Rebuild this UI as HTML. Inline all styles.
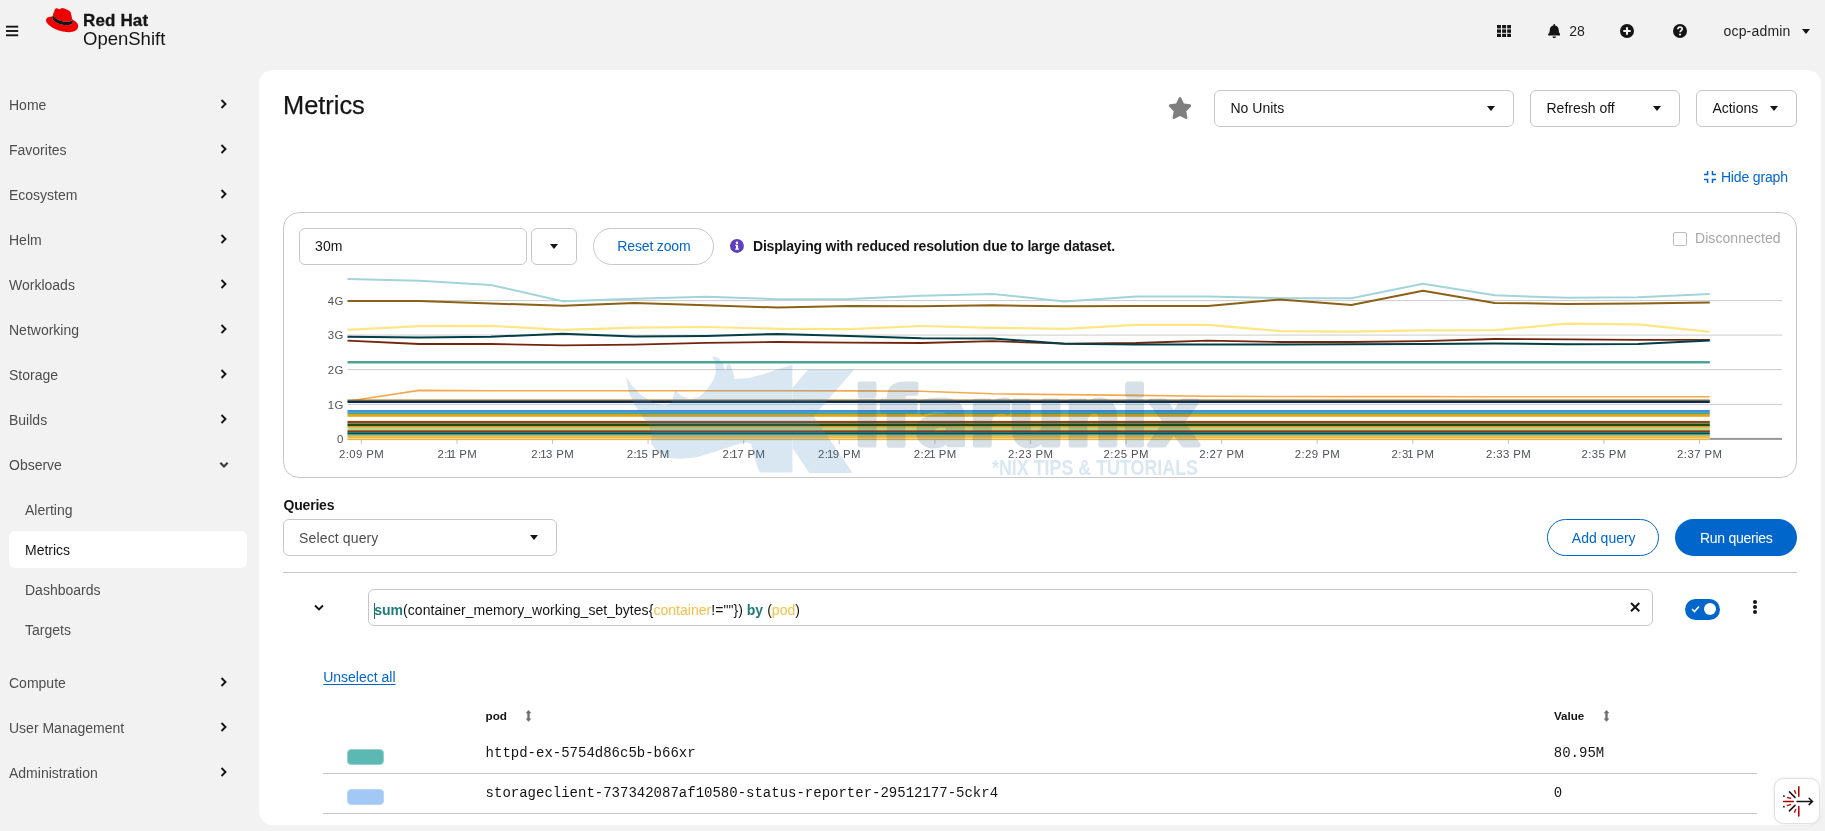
<!DOCTYPE html>
<html lang="en">
<head>
<meta charset="utf-8">
<title>Metrics · Red Hat OpenShift</title>
<style>
*{box-sizing:border-box;margin:0;padding:0}
html,body{width:1825px;height:831px;overflow:hidden;background:#f2f2f2;font-family:"Liberation Sans",sans-serif;color:#151515;font-size:14px}
.abs{position:absolute}
#mast{position:absolute;left:0;top:0;width:1825px;height:70px;will-change:transform}
#side{position:absolute;left:0;top:70px;width:259px;height:761px;will-change:transform}
.nav{position:absolute;left:9px;height:20px;line-height:20px;color:#4d4d4d;font-size:14px;white-space:nowrap}
.nav.sub{left:25px}
.chev{position:absolute;left:220px;width:8px;height:10px}
#main{position:absolute;left:259px;top:69.600px;width:1562px;height:755.600px;background:#fff;border-radius:14px}
#content{position:absolute;left:0;top:0;width:1825px;height:831px;will-change:transform}
.t{position:absolute;white-space:nowrap;line-height:1}
.box{position:absolute;border:1px solid #c7c7c7;border-radius:6px;background:#fff}
.caret{position:absolute;width:0;height:0;border-left:4.5px solid transparent;border-right:4.5px solid transparent;border-top:5px solid #151515}
.hr{position:absolute;height:1px;background:#c7c7c7}
.mono{font-family:"Liberation Mono",monospace}
</style>
</head>
<body>
<div id="mast">
  <!-- hamburger -->
  <svg class="abs" style="left:6px;top:25px" width="13" height="12" viewBox="0 0 13 12"><rect x="0" y="0.700" width="12.200" height="1.900" fill="#151515"/><rect x="0" y="5.030" width="12.200" height="1.900" fill="#151515"/><rect x="0" y="9.350" width="12.200" height="1.900" fill="#151515"/></svg>
  <!-- hat -->
  <svg class="abs" style="left:45.8px;top:7.900px" width="34" height="26" viewBox="0 0 34 26"><path d="M22.6 14.8c2.2 0 5.4-.5 5.4-3.100 0-.2 0-.4-.1-.6L26.600 5.400c-.3-1.300-.6-1.900-2.800-3-1.700-.9-5.500-2.300-6.600-2.300-1 0-1.300 1.300-2.600 1.300-1.200 0-2.100-1-3.200-1-1.100 0-1.800.7-2.300 2.200 0 0-1.500 4.200-1.700 4.800 0 .1 0 .2 0 .3 0 1.600 6.400 7.100 15.200 7.100zM28.500 12.700c.3 1.500.3 1.600.3 1.800 0 2.500-2.800 3.900-6.500 3.900-8.400 0-15.700-4.900-15.700-8.100 0-.5.100-.9.300-1.300C3.900 9.200 0 9.700 0 13.200c0 5.700 13.500 12.700 24.200 12.700 8.200 0 10.300-3.700 10.300-6.600 0-2.300-2-4.900-5.600-6.500z" fill="#e00" transform="scale(0.935)"/><path d="M28.500 12.700c.3 1.500.3 1.600.3 1.800 0 2.500-2.800 3.900-6.500 3.900-8.400 0-15.700-4.900-15.700-8.100 0-.5.100-.9.300-1.300l.7-1.600c0 .1 0 .2 0 .3 0 1.600 6.400 7.100 15.200 7.100 2.200 0 5.400-.5 5.400-3.100 0-.2 0-.4-.1-.6z" fill="#151515" transform="scale(0.935)"/></svg>
  <div class="t" style="left:83px;top:12.300px;font-size:17px;font-weight:bold;letter-spacing:0.15px;-webkit-text-stroke:0.3px #151515;color:#151515">Red Hat</div>
  <div class="t" style="left:83px;top:30px;font-size:18.500px;color:#151515">OpenShift</div>
  <!-- app launcher -->
  <svg class="abs" style="left:1497px;top:25px" width="14.200" height="12.200" viewBox="0 0 14.200 12.200"><g fill="#151515"><rect x="0" y="0" width="4" height="3.400"/><rect x="5.100" y="0" width="4" height="3.400"/><rect x="10.200" y="0" width="4" height="3.400"/><rect x="0" y="4.400" width="4" height="3.400"/><rect x="5.100" y="4.400" width="4" height="3.400"/><rect x="10.200" y="4.400" width="4" height="3.400"/><rect x="0" y="8.800" width="4" height="3.400"/><rect x="5.100" y="8.800" width="4" height="3.400"/><rect x="10.200" y="8.800" width="4" height="3.400"/></g></svg>
  <!-- bell -->
  <svg class="abs" style="left:1547.800px;top:23.800px" width="12.500" height="14.300" viewBox="0 0 448 512"><path fill="#151515" d="M224 512c35.320 0 63.970-28.650 63.970-64H160.030c0 35.350 28.650 64 63.970 64zm215.390-149.710c-19.320-20.760-55.470-51.990-55.470-154.290 0-77.700-54.480-139.900-127.940-155.160V32c0-17.670-14.320-32-31.980-32s-31.980 14.330-31.980 32v20.840C118.560 68.100 64.080 130.300 64.080 208c0 102.300-36.150 133.530-55.470 154.290-6 6.450-8.660 14.160-8.610 21.710.11 16.400 12.980 32 32.100 32h383.800c19.120 0 32-15.600 32.100-32 .05-7.550-2.610-15.270-8.610-21.710z"/></svg>
  <div class="t" style="left:1569.200px;top:23.650px;font-size:14px;color:#1f1f1f">28</div>
  <!-- plus circle -->
  <svg class="abs" style="left:1620px;top:23.800px" width="14" height="14" viewBox="0 0 14 14"><circle cx="7" cy="7" r="7" fill="#151515"/><path d="M7 3.300V10.700M3.300 7H10.700" stroke="#f2f2f2" stroke-width="2.100"/></svg>
  <!-- question circle -->
  <svg class="abs" style="left:1673px;top:23.800px" width="14" height="14" viewBox="0 0 14 14"><circle cx="7" cy="7" r="7" fill="#151515"/><path d="M4.900 5.300C4.900 3.900 5.900 3.200 7.050 3.200C8.300 3.200 9.200 4 9.200 5.050C9.200 6.500 7.100 6.600 7.100 8.300" fill="none" stroke="#f2f2f2" stroke-width="1.700"/><circle cx="7.050" cy="10.500" r="1.100" fill="#f2f2f2"/></svg>
  <div class="t" style="left:1723.500px;top:23.650px;font-size:14px;letter-spacing:0.18px;color:#1f1f1f">ocp-admin</div>
  <div class="caret" style="left:1801.900px;top:29px"></div>
</div>
<div id="side">
  <div class="nav" style="top:25px">Home</div>
  <svg class="chev" style="top:29px" viewBox="0 0 8 10"><path d="M1.500 1 L5.500 5 L1.500 9" fill="none" stroke="#151515" stroke-width="1.900"/></svg>
  <div class="nav" style="top:70px">Favorites</div>
  <svg class="chev" style="top:74px" viewBox="0 0 8 10"><path d="M1.500 1 L5.500 5 L1.500 9" fill="none" stroke="#151515" stroke-width="1.900"/></svg>
  <div class="nav" style="top:115px">Ecosystem</div>
  <svg class="chev" style="top:119px" viewBox="0 0 8 10"><path d="M1.500 1 L5.500 5 L1.500 9" fill="none" stroke="#151515" stroke-width="1.900"/></svg>
  <div class="nav" style="top:160px">Helm</div>
  <svg class="chev" style="top:164px" viewBox="0 0 8 10"><path d="M1.500 1 L5.500 5 L1.500 9" fill="none" stroke="#151515" stroke-width="1.900"/></svg>
  <div class="nav" style="top:205px">Workloads</div>
  <svg class="chev" style="top:209px" viewBox="0 0 8 10"><path d="M1.500 1 L5.500 5 L1.500 9" fill="none" stroke="#151515" stroke-width="1.900"/></svg>
  <div class="nav" style="top:250px">Networking</div>
  <svg class="chev" style="top:254px" viewBox="0 0 8 10"><path d="M1.500 1 L5.500 5 L1.500 9" fill="none" stroke="#151515" stroke-width="1.900"/></svg>
  <div class="nav" style="top:295px">Storage</div>
  <svg class="chev" style="top:299px" viewBox="0 0 8 10"><path d="M1.500 1 L5.500 5 L1.500 9" fill="none" stroke="#151515" stroke-width="1.900"/></svg>
  <div class="nav" style="top:340px">Builds</div>
  <svg class="chev" style="top:344px" viewBox="0 0 8 10"><path d="M1.500 1 L5.500 5 L1.500 9" fill="none" stroke="#151515" stroke-width="1.900"/></svg>
  <div class="nav" style="top:385px">Observe</div>
  <svg class="chev" style="top:391px;left:219px;width:10px;height:8px" viewBox="0 0 10 8"><path d="M1.300 1.800 L5 5.500 L8.700 1.800" fill="none" stroke="#3d3d3d" stroke-width="2.200"/></svg>
  <div class="nav" style="top:603px">Compute</div>
  <svg class="chev" style="top:607px" viewBox="0 0 8 10"><path d="M1.500 1 L5.500 5 L1.500 9" fill="none" stroke="#151515" stroke-width="1.900"/></svg>
  <div class="nav" style="top:648px">User Management</div>
  <svg class="chev" style="top:652px" viewBox="0 0 8 10"><path d="M1.500 1 L5.500 5 L1.500 9" fill="none" stroke="#151515" stroke-width="1.900"/></svg>
  <div class="nav" style="top:693px">Administration</div>
  <svg class="chev" style="top:697px" viewBox="0 0 8 10"><path d="M1.500 1 L5.500 5 L1.500 9" fill="none" stroke="#151515" stroke-width="1.900"/></svg>
  <div class="abs" style="left:9px;top:461px;width:238px;height:37px;background:#fff;border-radius:6px"></div>
  <div class="nav sub" style="top:430px">Alerting</div>
  <div class="nav sub" style="top:470px;color:#151515">Metrics</div>
  <div class="nav sub" style="top:510px">Dashboards</div>
  <div class="nav sub" style="top:550px">Targets</div>
</div>
<div id="main"></div>
<div id="content">
<div class="t" style="left:283.00px;top:92.70px;font-size:25.4px;color:#151515;-webkit-text-stroke:0.25px #151515">Metrics</div>
<svg class="abs" style="left:1168.100px;top:97px" width="24" height="22" viewBox="0 0 576 512" preserveAspectRatio="none"><path fill="#7f7f7f" d="M259.300 17.800L194 150.200 47.900 171.500c-26.200 3.800-36.700 36.100-17.700 54.600l105.700 103-25 145.500c-4.500 26.300 23.200 46 46.400 33.700L288 439.600l130.700 68.700c23.200 12.200 50.900-7.400 46.400-33.700l-25-145.500 105.700-103c19-18.500 8.500-50.800-17.700-54.600L382 150.200 316.700 17.800c-11.700-23.600-45.600-23.900-57.400 0z"/></svg>
<div class="box" style="left:1214px;top:90px;width:300px;height:37px"></div>
<div class="t" style="left:1230.50px;top:101.25px;font-size:14px;color:#151515">No Units</div>
<div class="caret" style="left:1486.5px;top:106px"></div>
<div class="box" style="left:1530px;top:90px;width:150px;height:37px"></div>
<div class="t" style="left:1546.50px;top:101.25px;font-size:14px;color:#151515">Refresh off</div>
<div class="caret" style="left:1652.5px;top:106px"></div>
<div class="box" style="left:1696px;top:90px;width:101px;height:37px"></div>
<div class="t" style="left:1712.40px;top:101.25px;font-size:14px;color:#151515">Actions</div>
<div class="caret" style="left:1769.5px;top:106px"></div>
<svg class="abs" style="left:1703.900px;top:170.900px" width="12.100" height="12.100" viewBox="0 0 12.100 12.100"><g fill="none" stroke="#0066cc" stroke-width="1.500"><path d="M0 3.600H3.600V0"/><path d="M8.500 0V3.600H12.100"/><path d="M0 8.500H3.600V12.100"/><path d="M12.100 8.500H8.500V12.100"/></g></svg>
<div class="t" style="left:1720.90px;top:169.85px;font-size:14px;color:#0066cc;letter-spacing:-0.15px">Hide graph</div>
<div class="box" style="left:283px;top:212px;width:1514px;height:265.500px;border-radius:16px;border-color:#c7c7c7"></div>
<div class="box" style="left:299px;top:228px;width:228px;height:37px"></div>
<div class="t" style="left:315.10px;top:238.75px;font-size:14px;">30m</div>
<div class="box" style="left:531px;top:228px;width:46px;height:37px"></div>
<div class="caret" style="left:549.500px;top:244px"></div>
<div class="box" style="left:593px;top:228px;width:120.500px;height:37px;border-radius:19px"></div>
<div class="t" style="left:617.30px;top:238.75px;font-size:14px;color:#0066cc;letter-spacing:-0.15px">Reset zoom</div>
<svg class="abs" style="left:729.800px;top:239.300px" width="13.900" height="13.900" viewBox="0 0 16 16"><circle cx="8" cy="8" r="8" fill="#5e40be"/><rect x="6.900" y="6.700" width="2.400" height="5.300" fill="#fff"/><rect x="6" y="6.700" width="2" height="1.300" fill="#fff"/><rect x="5.900" y="11" width="4.400" height="1.300" fill="#fff"/><circle cx="8" cy="4.300" r="1.450" fill="#fff"/></svg>
<div class="t" id="disp" style="left:753.00px;top:238.75px;font-size:14px;font-weight:bold;color:#151515;letter-spacing:-0.19px">Displaying with reduced resolution due to large dataset.</div>
<div class="abs" style="left:1673px;top:232px;width:14px;height:14px;border:1px solid #bdbdbd;border-radius:2px;background:#fff"></div>
<div class="t" style="left:1695.00px;top:231.15px;font-size:14px;color:#a6a6a6;letter-spacing:0.07px">Disconnected</div>
<svg class="abs" style="left:0;top:0" width="1825" height="831" viewBox="0 0 1825 831" font-family="'Liberation Sans',sans-serif">
<line x1="347.500" x2="1782" y1="300.6" y2="300.6" stroke="#cbcbcb" stroke-width="1"/>
<line x1="347.500" x2="1782" y1="335.1" y2="335.1" stroke="#cbcbcb" stroke-width="1"/>
<line x1="347.500" x2="1782" y1="369.6" y2="369.6" stroke="#cbcbcb" stroke-width="1"/>
<line x1="347.500" x2="1782" y1="404.4" y2="404.4" stroke="#cbcbcb" stroke-width="1"/>
<polyline points="347.5,278.9 419.2,280.8 490.9,285.0 562.6,301.2 634.3,298.8 706.0,296.8 777.7,299.2 849.4,299.0 921.1,295.8 992.8,293.9 1064.5,301.4 1136.2,296.6 1207.9,296.6 1279.6,298.2 1351.3,298.2 1423.0,283.8 1494.7,295.3 1566.4,297.8 1638.1,297.2 1709.8,294.1" fill="none" stroke="#a2d4d9" stroke-width="2" stroke-linejoin="round"/>
<polyline points="347.5,301.0 419.2,301.0 490.9,303.5 562.6,305.7 634.3,303.0 706.0,305.3 777.7,307.5 849.4,305.9 921.1,306.3 992.8,305.3 1064.5,306.3 1136.2,306.1 1207.9,306.1 1279.6,299.6 1351.3,304.9 1423.0,290.7 1494.7,302.9 1566.4,303.9 1638.1,303.5 1709.8,302.6" fill="none" stroke="#8a6116" stroke-width="2" stroke-linejoin="round"/>
<polyline points="347.5,329.8 419.2,326.2 490.9,325.8 562.6,329.8 634.3,327.6 706.0,327.0 777.7,328.8 849.4,329.2 921.1,326.0 992.8,327.8 1064.5,328.8 1136.2,324.8 1207.9,324.8 1279.6,331.2 1351.3,331.6 1423.0,330.4 1494.7,330.2 1566.4,323.7 1638.1,324.4 1709.8,331.9" fill="none" stroke="#ffe685" stroke-width="2.2" stroke-linejoin="round"/>
<polyline points="347.5,340.6 419.2,344.0 490.9,344.0 562.6,345.4 634.3,344.6 706.0,342.8 777.7,342.0 849.4,342.6 921.1,343.0 992.8,341.2 1064.5,343.6 1136.2,343.0 1207.9,340.6 1279.6,342.0 1351.3,342.0 1423.0,341.2 1494.7,339.0 1566.4,339.4 1638.1,339.8 1709.8,339.8" fill="none" stroke="#73260d" stroke-width="1.8" stroke-linejoin="round"/>
<polyline points="347.5,336.7 419.2,337.5 490.9,336.7 562.6,333.7 634.3,336.5 706.0,335.9 777.7,333.9 849.4,336.1 921.1,338.3 992.8,338.5 1064.5,343.8 1136.2,344.6 1207.9,344.4 1279.6,344.4 1351.3,344.2 1423.0,343.9 1494.7,343.4 1566.4,344.2 1638.1,344.0 1709.8,340.4" fill="none" stroke="#003f46" stroke-width="2" stroke-linejoin="round"/>
<rect x="347.5" y="361.00" width="1362.3" height="2.50" fill="#4aa691"/>
<polyline points="347.5,401.3 419.2,390.4 490.9,390.8 562.6,390.8 634.3,390.8 706.0,390.8 777.7,390.8 849.4,390.9 921.1,391.2 992.8,393.8 1064.5,394.6 1136.2,395.4 1207.9,396.2 1279.6,396.5 1351.3,396.6 1423.0,396.6 1494.7,396.7 1566.4,396.8 1638.1,396.8 1709.8,396.8" fill="none" stroke="#f4a950" stroke-width="1.6" stroke-linejoin="round"/>
<rect x="347.5" y="399.50" width="1362.3" height="1.40" fill="#a86a10"/>
<rect x="347.5" y="400.70" width="1362.3" height="2.30" fill="#002d5b"/>
<rect x="347.5" y="410.00" width="1362.3" height="2.10" fill="#4a8fe0"/>
<rect x="347.5" y="412.10" width="1362.3" height="1.90" fill="#3aa7a3"/>
<rect x="347.5" y="414.00" width="1362.3" height="2.80" fill="#dca614"/>
<rect x="347.5" y="420.90" width="1362.3" height="2.10" fill="#a33d00"/>
<rect x="347.5" y="423.00" width="1362.3" height="0.70" fill="#2a9d8f"/>
<rect x="347.5" y="423.70" width="1362.3" height="2.30" fill="#1d4d04"/>
<rect x="347.5" y="426.00" width="1362.3" height="1.80" fill="#d89b36"/>
<rect x="347.5" y="427.80" width="1362.3" height="2.50" fill="#b4d98a"/>
<rect x="347.5" y="430.30" width="1362.3" height="1.70" fill="#8a3a0c"/>
<rect x="347.5" y="432.00" width="1362.3" height="1.00" fill="#1e7d78"/>
<rect x="347.5" y="433.00" width="1362.3" height="1.50" fill="#004d52"/>
<rect x="347.5" y="434.50" width="1362.3" height="0.80" fill="#3f8a5e"/>
<rect x="347.5" y="435.30" width="1362.3" height="0.70" fill="#9aae5c"/>
<rect x="347.5" y="436.00" width="1362.3" height="2.00" fill="#f2b84a"/>
<rect x="347.5" y="438.00" width="1362.3" height="1.60" fill="#ffd76a"/>
<rect x="1709.800" y="437.900" width="72.200" height="2" fill="#979797"/>
<rect x="347.500" y="439.300" width="1362.300" height="0.800" fill="#c9a040"/>
<line x1="361.4" x2="361.4" y1="439.900" y2="444" stroke="#c4c4c4" stroke-width="1"/>
<text x="361.6" y="458" font-size="11.400" letter-spacing="0.400" fill="#4f5255" text-anchor="middle" dx="0 0 0 0 0 0 0">2:09 PM</text>
<line x1="457.0" x2="457.0" y1="439.900" y2="444" stroke="#c4c4c4" stroke-width="1"/>
<text x="457.2" y="458" font-size="11.400" letter-spacing="0.400" fill="#4f5255" text-anchor="middle" dx="0 0 -1.5 -2.4 -0.9 0 0">2:11 PM</text>
<line x1="552.6" x2="552.6" y1="439.900" y2="444" stroke="#c4c4c4" stroke-width="1"/>
<text x="552.8" y="458" font-size="11.400" letter-spacing="0.400" fill="#4f5255" text-anchor="middle" dx="0 0 -1.5 -0.9 0 0 0">2:13 PM</text>
<line x1="648.1" x2="648.1" y1="439.900" y2="444" stroke="#c4c4c4" stroke-width="1"/>
<text x="648.3" y="458" font-size="11.400" letter-spacing="0.400" fill="#4f5255" text-anchor="middle" dx="0 0 -1.5 -0.9 0 0 0">2:15 PM</text>
<line x1="743.7" x2="743.7" y1="439.900" y2="444" stroke="#c4c4c4" stroke-width="1"/>
<text x="743.9" y="458" font-size="11.400" letter-spacing="0.400" fill="#4f5255" text-anchor="middle" dx="0 0 -1.5 -0.9 0 0 0">2:17 PM</text>
<line x1="839.3" x2="839.3" y1="439.900" y2="444" stroke="#c4c4c4" stroke-width="1"/>
<text x="839.5" y="458" font-size="11.400" letter-spacing="0.400" fill="#4f5255" text-anchor="middle" dx="0 0 -1.5 -0.9 0 0 0">2:19 PM</text>
<line x1="934.9" x2="934.9" y1="439.900" y2="444" stroke="#c4c4c4" stroke-width="1"/>
<text x="935.1" y="458" font-size="11.400" letter-spacing="0.400" fill="#4f5255" text-anchor="middle" dx="0 0 0 -1.5 -0.9 0 0">2:21 PM</text>
<line x1="1030.5" x2="1030.5" y1="439.900" y2="444" stroke="#c4c4c4" stroke-width="1"/>
<text x="1030.7" y="458" font-size="11.400" letter-spacing="0.400" fill="#4f5255" text-anchor="middle" dx="0 0 0 0 0 0 0">2:23 PM</text>
<line x1="1126.0" x2="1126.0" y1="439.900" y2="444" stroke="#c4c4c4" stroke-width="1"/>
<text x="1126.2" y="458" font-size="11.400" letter-spacing="0.400" fill="#4f5255" text-anchor="middle" dx="0 0 0 0 0 0 0">2:25 PM</text>
<line x1="1221.6" x2="1221.6" y1="439.900" y2="444" stroke="#c4c4c4" stroke-width="1"/>
<text x="1221.8" y="458" font-size="11.400" letter-spacing="0.400" fill="#4f5255" text-anchor="middle" dx="0 0 0 0 0 0 0">2:27 PM</text>
<line x1="1317.2" x2="1317.2" y1="439.900" y2="444" stroke="#c4c4c4" stroke-width="1"/>
<text x="1317.4" y="458" font-size="11.400" letter-spacing="0.400" fill="#4f5255" text-anchor="middle" dx="0 0 0 0 0 0 0">2:29 PM</text>
<line x1="1412.8" x2="1412.8" y1="439.900" y2="444" stroke="#c4c4c4" stroke-width="1"/>
<text x="1413.0" y="458" font-size="11.400" letter-spacing="0.400" fill="#4f5255" text-anchor="middle" dx="0 0 0 -1.5 -0.9 0 0">2:31 PM</text>
<line x1="1508.4" x2="1508.4" y1="439.900" y2="444" stroke="#c4c4c4" stroke-width="1"/>
<text x="1508.6" y="458" font-size="11.400" letter-spacing="0.400" fill="#4f5255" text-anchor="middle" dx="0 0 0 0 0 0 0">2:33 PM</text>
<line x1="1603.9" x2="1603.9" y1="439.900" y2="444" stroke="#c4c4c4" stroke-width="1"/>
<text x="1604.1" y="458" font-size="11.400" letter-spacing="0.400" fill="#4f5255" text-anchor="middle" dx="0 0 0 0 0 0 0">2:35 PM</text>
<line x1="1699.5" x2="1699.5" y1="439.900" y2="444" stroke="#c4c4c4" stroke-width="1"/>
<text x="1699.7" y="458" font-size="11.400" letter-spacing="0.400" fill="#4f5255" text-anchor="middle" dx="0 0 0 0 0 0 0">2:37 PM</text>
<text x="343.600" y="304.7" font-size="11.400" letter-spacing="0.300" fill="#4f5255" text-anchor="end">4G</text>
<text x="343.600" y="339.2" font-size="11.400" letter-spacing="0.300" fill="#4f5255" text-anchor="end">3G</text>
<text x="343.600" y="373.7" font-size="11.400" letter-spacing="0.300" fill="#4f5255" text-anchor="end">2G</text>
<text x="343.600" y="408.5" font-size="11.400" letter-spacing="0.300" fill="#4f5255" text-anchor="end">1G</text>
<text x="343.600" y="443.0" font-size="11.400" letter-spacing="0.300" fill="#4f5255" text-anchor="end">0</text>
<defs><clipPath id="kclip"><rect x="792.400" y="350" width="62.800" height="130"/></clipPath></defs>
<g opacity="0.2">
<title>Kifarunix</title>
<path d="M626.3 376.6 L632.2 386.0 L641.6 395.4 L654.1 403.2 L665.1 405.5 L671.3 403.2 L675.2 389.9 L680.7 395.4 L690.1 399.3 L699.5 396.9 L707.3 389.1 L713.6 379.7 L715.9 371.9 L715.1 362.5 L712.0 356.3 L718.3 357.8 L723.0 364.1 L725.3 371.9 L726.9 364.9 L730.0 364.1 L732.3 370.3 L734.7 378.9 L748.0 378.2 L763.6 374.2 L779.3 368.8 L791.8 364.9 L792.4 364.9 L792.4 472.5 L759.7 472.5 L756.6 464.2 L753.5 453.3 L751.1 443.9 L746.4 442.3 L733.9 445.4 L715.1 451.7 L696.4 457.2 L680.7 458.7 L666.6 458.0 L655.7 450.1 L651.0 443.1 L651.8 434.5 L648.6 424.3 L641.6 415.7 L633.8 403.2 L628.3 390.7Z" fill="#4187c3"/>
<g clip-path="url(#kclip)"><text transform="translate(760.800 460.500) scale(0.86 1)" font-family="'Liberation Sans',sans-serif" font-weight="bold" font-size="115" fill="#4187c3" stroke="#4187c3" stroke-width="24" stroke-linejoin="miter" stroke-miterlimit="10">K</text></g>
<text x="992" y="475" font-family="'Liberation Sans',sans-serif" font-weight="bold" font-size="22" fill="#4187c3" textLength="206" lengthAdjust="spacingAndGlyphs">*NIX TIPS &amp; TUTORIALS</text>
</g>
<g opacity="0.175"><text x="853.500" y="445" font-family="'DejaVu Sans','Liberation Sans',sans-serif" font-weight="bold" font-size="80" fill="#1e5078" stroke="#1e5078" stroke-width="5" stroke-linejoin="round" textLength="346" lengthAdjust="spacingAndGlyphs">ifarunix</text></g>

</svg>

<div class="t" style="left:283.50px;top:497.55px;font-size:14px;font-weight:bold;letter-spacing:-0.2px">Queries</div>
<div class="box" style="left:283px;top:519px;width:274px;height:37px"></div>
<div class="t" style="left:299.10px;top:530.85px;font-size:14px;color:#4d4d4d;letter-spacing:0.13px">Select query</div>
<div class="caret" style="left:529.6px;top:535px"></div>
<div class="box" style="left:1547px;top:519px;width:112px;height:37px;border-radius:19px;border-color:#0066cc"></div>
<div class="t" style="left:1571.80px;top:530.85px;font-size:14px;color:#0066cc">Add query</div>
<div class="abs" style="left:1675px;top:519px;width:122px;height:37px;border-radius:19px;background:#0066cc"></div>
<div class="t" style="left:1699.90px;top:530.85px;font-size:14px;color:#fff;letter-spacing:-0.26px">Run queries</div>
<div class="hr" style="left:283px;top:572px;width:1514px"></div>
<svg class="abs" style="left:313.500px;top:604px" width="10" height="8" viewBox="0 0 10 8"><path d="M1 1.500 L5 5.500 L9 1.500" fill="none" stroke="#151515" stroke-width="1.900"/></svg>
<div class="box" style="left:368px;top:589px;width:1285px;height:36.500px"></div>
<div class="abs" style="left:373.500px;top:602.500px;width:1.500px;height:16px;background:#1b6e6e"></div>
<div class="t" id="qtext" style="left:374.20px;top:603.45px;font-size:14px;color:#151515;letter-spacing:0.035px"><b style="color:#1f7a78">sum</b>(container_memory_working_set_bytes{<span style="color:#f4c145">container</span>!=""}) <b style="color:#1f7a78">by</b> (<span style="color:#f4c145">pod</span>)</div>
<svg class="abs" style="left:1629.900px;top:601.900px" width="10.300" height="10.300" viewBox="0 0 10 10"><path d="M1 1L9 9M9 1L1 9" stroke="#151515" stroke-width="2" fill="none"/></svg>
<div class="abs" style="left:1684.900px;top:598.800px;width:35.200px;height:21.200px;border-radius:11px;background:#0066cc"></div>
<div class="abs" style="left:1704px;top:603.200px;width:12.200px;height:12.200px;border-radius:7px;background:#fff"></div>
<svg class="abs" style="left:1691px;top:605.300px" width="9" height="8" viewBox="0 0 9 8"><path d="M1 4L3.500 6.500L8 1.500" stroke="#fff" stroke-width="1.600" fill="none"/></svg>
<div class="abs" style="left:1752.900px;top:600.3px;width:4px;height:4px;border-radius:2px;background:#151515"></div>
<div class="abs" style="left:1752.900px;top:605.05px;width:4px;height:4px;border-radius:2px;background:#151515"></div>
<div class="abs" style="left:1752.900px;top:609.8px;width:4px;height:4px;border-radius:2px;background:#151515"></div>
<div class="t" style="left:323.20px;top:670.15px;font-size:14px;color:#0066cc;text-decoration:underline;text-underline-offset:2px">Unselect all</div>
<div class="t" style="left:485.60px;top:710.40px;font-size:11.7px;font-weight:bold">pod</div>
<svg class="abs" style="left:525.4px;top:710.100px" width="7" height="11.800" viewBox="0 0 7 12"><path d="M3.500 0L6.400 3.400H4.700V8.600H6.400L3.500 12L0.600 8.600H2.300V3.400H0.600Z" fill="#6e6e6e"/></svg>
<div class="t" style="left:1553.90px;top:710.38px;font-size:11.6px;font-weight:bold">Value</div>
<svg class="abs" style="left:1603.3px;top:710.100px" width="7" height="11.800" viewBox="0 0 7 12"><path d="M3.500 0L6.400 3.400H4.700V8.600H6.400L3.500 12L0.600 8.600H2.300V3.400H0.600Z" fill="#6e6e6e"/></svg>
<div class="abs" style="left:347px;top:748.500px;width:37px;height:16px;border-radius:4px;background:#5cb8b2;border:1px solid #9ccfcb"></div>
<div class="t mono" style="left:485.60px;top:746.37px;font-size:14px;color:#151515">httpd-ex-5754d86c5b-b66xr</div>
<div class="t mono" style="left:1553.80px;top:746.37px;font-size:14px;">80.95M</div>
<div class="hr" style="left:323px;top:773px;width:1434px"></div>
<div class="abs" style="left:347px;top:788.500px;width:37px;height:16px;border-radius:4px;background:#a2c8f5;border:1px solid #bcd6f5"></div>
<div class="t mono" style="left:485.60px;top:786.37px;font-size:14px;">storageclient-737342087af10580-status-reporter-29512177-5ckr4</div>
<div class="t mono" style="left:1553.80px;top:786.37px;font-size:14px;">0</div>
<div class="hr" style="left:323px;top:812.500px;width:1434px"></div>
<div class="abs" style="left:1774.200px;top:778.200px;width:46px;height:46px;border-radius:9.500px;background:#fff;border:1px solid #dfe1e3;box-shadow:0 0 3px rgba(0,0,0,.10)"></div>
<svg class="abs" style="left:0;top:0" width="1825" height="831" viewBox="0 0 1825 831"><g fill="none" stroke-width="1.500" stroke-linecap="round"><path d="M1797 801.400H1812.200M1809.100 798.200L1812.500 801.400L1809.100 804.600" stroke="#151515"/><path d="M1789.400 791.900L1795 797.400M1789.400 810.900L1795 805.400" stroke="#151515"/><path d="M1798.800 786.800V796.200M1798.800 806.500V816M1783.600 801.400H1793.400" stroke="#a30000"/><path d="M1794.500 790.600L1795.700 793.300M1794.500 812.300L1795.700 809.500M1787.600 797.600L1790.500 798.300M1787.600 805.500L1790.500 804.600" stroke="#d11"/></g><rect x="1783.100" y="795.300" width="1.600" height="1.600" fill="#151515"/><rect x="1783.100" y="805.900" width="1.600" height="1.600" fill="#151515"/></svg>

</div>
</body>
</html>
